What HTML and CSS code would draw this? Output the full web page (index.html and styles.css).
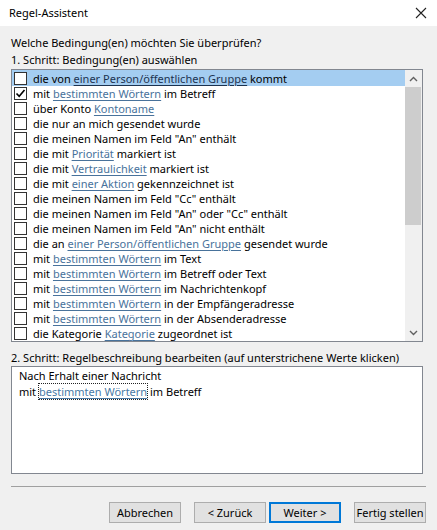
FILE: index.html
```html
<!DOCTYPE html>
<html lang="de">
<head>
<meta charset="utf-8">
<title>Regel-Assistent</title>
<link rel="stylesheet" href="styles.css">
</head>
<body>
<div class="dialog">
  <div class="titlebar">
    <span class="title">Regel-Assistent</span>
    <svg class="close" width="12" height="12" viewBox="0 0 12 12"><path d="M1 1L11 11M11 1L1 11" stroke="#222" stroke-width="1.1" fill="none"/></svg>
  </div>
  <div class="content">
    <div class="label">Welche Bedingung(en) möchten Sie überprüfen?</div>
    <div class="label">1. Schritt: Bedingung(en) auswählen</div>
    <div class="listbox">
      <ul class="rows">
        <li class="row selected"><span class="cb"></span><span>die von <a class="lk">einer Person/öffentlichen Gruppe</a> kommt</span></li>
        <li class="row"><span class="cb checked"><svg width="11" height="11" viewBox="0 0 11 11"><path d="M1.5 5.5L4.2 8.3L9.5 2" stroke="#000" stroke-width="1.6" fill="none"/></svg></span><span>mit <a class="lk">bestimmten Wörtern</a> im Betreff</span></li>
        <li class="row"><span class="cb"></span><span>über Konto <a class="lk">Kontoname</a></span></li>
        <li class="row"><span class="cb"></span><span>die nur an mich gesendet wurde</span></li>
        <li class="row"><span class="cb"></span><span>die meinen Namen im Feld "An" enthält</span></li>
        <li class="row"><span class="cb"></span><span>die mit <a class="lk">Priorität</a> markiert ist</span></li>
        <li class="row"><span class="cb"></span><span>die mit <a class="lk">Vertraulichkeit</a> markiert ist</span></li>
        <li class="row"><span class="cb"></span><span>die mit <a class="lk">einer Aktion</a> gekennzeichnet ist</span></li>
        <li class="row"><span class="cb"></span><span>die meinen Namen im Feld "Cc" enthält</span></li>
        <li class="row"><span class="cb"></span><span>die meinen Namen im Feld "An" oder "Cc" enthält</span></li>
        <li class="row"><span class="cb"></span><span>die meinen Namen im Feld "An" nicht enthält</span></li>
        <li class="row"><span class="cb"></span><span>die an <a class="lk">einer Person/öffentlichen Gruppe</a> gesendet wurde</span></li>
        <li class="row"><span class="cb"></span><span>mit <a class="lk">bestimmten Wörtern</a> im Text</span></li>
        <li class="row"><span class="cb"></span><span>mit <a class="lk">bestimmten Wörtern</a> im Betreff oder Text</span></li>
        <li class="row"><span class="cb"></span><span>mit <a class="lk">bestimmten Wörtern</a> im Nachrichtenkopf</span></li>
        <li class="row"><span class="cb"></span><span>mit <a class="lk">bestimmten Wörtern</a> in der Empfängeradresse</span></li>
        <li class="row"><span class="cb"></span><span>mit <a class="lk">bestimmten Wörtern</a> in der Absenderadresse</span></li>
        <li class="row"><span class="cb"></span><span>die Kategorie <a class="lk">Kategorie</a> zugeordnet ist</span></li>
      </ul>
      <div class="scrollbar">
        <div class="arrow"><svg width="9" height="6" viewBox="0 0 9 6"><path d="M1 5L4.5 1.5L8 5" stroke="#606060" stroke-width="1.4" fill="none"/></svg></div>
        <div class="track"><div class="thumb"></div></div>
        <div class="arrow"><svg width="9" height="6" viewBox="0 0 9 6"><path d="M1 1L4.5 4.5L8 1" stroke="#606060" stroke-width="1.4" fill="none"/></svg></div>
      </div>
    </div>
    <div class="label step2">2. Schritt: Regelbeschreibung bearbeiten (auf unterstrichene Werte klicken)</div>
    <div class="desc">
      <div>Nach Erhalt einer Nachricht</div>
      <div>mit <a class="lk focus">bestimmten Wörtern</a> im Betreff</div>
    </div>
    <div class="separator"></div>
    <div class="buttons">
      <button class="btn">Abbrechen</button>
      <div class="nav">
        <button class="btn">&lt; Zurück</button>
        <button class="btn default">Weiter &gt;</button>
      </div>
      <button class="btn">Fertig stellen</button>
    </div>
  </div>
</div>
</body>
</html>
```
FILE: styles.css
```css
* { box-sizing: border-box; }
html, body { margin: 0; padding: 0; }
body {
  width: 437px;
  height: 530px;
  background: #f0f0f0;
  font-family: "Noto Sans", "Open Sans", sans-serif;
  font-size: 11px;
  color: #000;
  overflow: hidden;
}
.dialog { display: flex; flex-direction: column; height: 530px; }
.titlebar {
  height: 26px;
  background: #fff;
  display: flex;
  align-items: center;
  justify-content: space-between;
  padding: 0 10px 2px 9px;
}
.title { font-size: 11px; color: #000; }
.close { display: block; margin-top: 2px; }
.content { padding: 8px 0 0 11px; display: flex; flex-direction: column; }
.label { height: 17px; line-height: 17px; white-space: nowrap; }
.listbox {
  margin-top: 1px;
  width: 412px;
  height: 273px;
  border: 1px solid #828790;
  background: #fff;
  display: flex;
}
.rows { list-style: none; margin: 0; padding: 1px 0 0; width: 393px; height: 271px; overflow: hidden; }
.row {
  height: 15px;
  display: flex;
  align-items: center;
  gap: 6px;
  padding-left: 2px;
  white-space: nowrap;
  line-height: 15px;
}
.row.selected { background: #a4cdf1; height: 16px; margin-top: -1px; padding-top: 1px; }
.cb {
  width: 13px; height: 13px;
  border: 1px solid #333;
  background: #fff;
  flex: none;
  display: flex;
  align-items: center;
  justify-content: center;
}
.lk { color: #48729b; text-decoration: underline; text-underline-offset: 2px; }
.selected .lk { color: #1c3350; }
.scrollbar { width: 17px; height: 271px; background: #f0f0f0; display: flex; flex-direction: column; }
.arrow { height: 17px; display: flex; align-items: center; justify-content: center; }
.track { flex: 1; }
.thumb { width: 16px; height: 138px; background: #cdcdcd; }
.step2 { margin-top: 7px; }
.desc {
  width: 412px;
  height: 108px;
  border: 1px solid #828790;
  background: #fff;
  padding: 1px 7px;
  line-height: 16px;
}
.desc .lk { color: #4a7aa5; outline: 1px dotted #222; outline-offset: 0; }
.separator { margin-top: 12px; width: 415px; height: 1px; background: #a0a0a0; }
.buttons {
  margin-top: 15px;
  width: 415px;
  display: flex;
  justify-content: flex-end;
  gap: 13px;
}
.nav { display: flex; gap: 3px; }
.btn {
  width: 72px;
  height: 21px;
  padding: 0;
  background: #e1e1e1;
  border: 1px solid #adadad;
  font-family: inherit;
  font-size: 11px;
  color: #000;
  white-space: nowrap;
}
.btn.default { border: 2px solid #0078d7; }
```
